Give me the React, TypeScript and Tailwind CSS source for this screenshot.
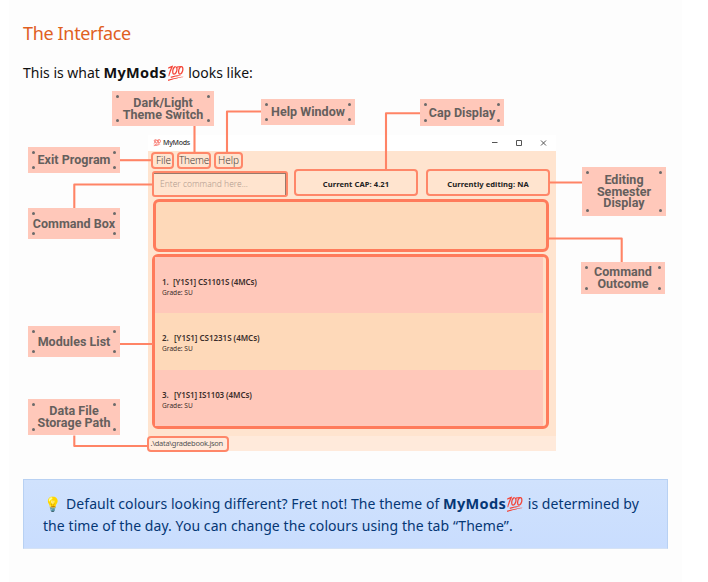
import type { ReactNode } from "react";

const SEGOE = "font-['Noto_Sans',sans-serif]";

function Hundred({ className = "" }: { className?: string }) {
  return <span className={`inline-block ${className}`}>💯</span>;
}

function Callout({ className, children }: { className: string; children: ReactNode }) {
  const dot = "absolute size-[3px] rounded-full bg-[#6b6a6a]";
  return (
    <div className={`absolute flex items-center justify-center bg-[#ffc8ba] ${className}`}>
      <span className={`${dot} left-[4px] top-[4px]`} />
      <span className={`${dot} right-[4px] top-[4px]`} />
      <span className={`${dot} left-[4px] bottom-[4px]`} />
      <span className={`${dot} right-[4px] bottom-[4px]`} />
      <div className="whitespace-nowrap text-center font-['Roboto',sans-serif] text-[12.5px] font-bold leading-[11.7px] tracking-[0.03px] text-[#655f5d]">
        {children}
      </div>
    </div>
  );
}

function Connectors() {
  return (
    <svg className="pointer-events-none absolute left-0 top-0" width="673" height="370" viewBox="9 90 673 370" fill="none" stroke="#ff8466" strokeWidth="2.1" strokeLinejoin="round">
      <path d="M194.5 126V152" />
      <path d="M261 111.5H227V152" />
      <path d="M420 113.2H386V169" />
      <path d="M120 160.2H151" />
      <path d="M74.3 208.5V184.5H152" />
      <path d="M549 182.5H582.5" />
      <path d="M549 238.5H621.7V262" />
      <path d="M116 344H153" />
      <path d="M74.3 435.5V446H148" />
    </svg>
  );
}

const modules = [
  { n: "1.", title: "[Y1S1] CS1101S (4MCs)", bg: "bg-[#ffc8ba]", num: "w-[11px]", fit: "tracking-[-0.12px]" },
  { n: "2.", title: "[Y1S1] CS1231S (4MCs)", bg: "bg-[#fed9b9]", num: "w-[12px]", fit: "tracking-[-0.03px]" },
  { n: "3.", title: "[Y1S1] IS1103 (4MCs)", bg: "bg-[#ffc8ba]", num: "w-[12px]", fit: "tracking-[-0.1px]" },
];

function AppWindow() {
  const tab = "flex h-[17px] items-center justify-center rounded-[4px] border-2 border-[#ff8769] text-[10px] font-light text-[#4b4240]";
  const status =
    "flex h-[27px] w-[124px] items-center justify-center rounded-[4px] border-2 border-[#ff8769] pt-[4px] text-[7.6px] font-bold tracking-[0.06px] text-[#222]";
  return (
    <div className={`ml-[139px] flex h-[316px] w-[408px] flex-col bg-[#ffe4cf] ${SEGOE}`}>
      <div className="flex h-4 shrink-0 items-center bg-white pl-[5px] text-[7px] font-medium tracking-[-0.28px] text-[#333]">
        <Hundred className="w-[10px] text-[6.5px]" />
        <span>MyMods</span>
        <svg className="ml-auto mr-[8px]" width="57" height="8" viewBox="0 0 57 8" fill="none" stroke="#555" strokeWidth="1">
          <path d="M1 3.5H6.5M25.5 1.5h5v5h-5zM50 1.5l5 5M55 1.5l-5 5" />
        </svg>
      </div>
      <div className="flex h-[18px] shrink-0 pl-[3px] pt-[1px]">
        <div className={`${tab} w-[23px] pl-[2px]`}>File</div>
        <div className={`${tab} ml-[3px] w-[34px] tracking-[-0.2px]`}>Theme</div>
        <div className={`${tab} ml-[3px] w-[29px]`}>Help</div>
      </div>
      <div className="flex h-[30px] shrink-0 pl-1">
        <div className="mt-[2px] h-[26px] w-[136px] rounded-[3px] border-2 border-[#ff8769]">
          <div className="flex h-full items-center border-r border-t border-[#98796b] pl-[6px] text-[8.5px] font-light text-[#b09a8e]">
            Enter command here...
          </div>
        </div>
        <div className={`ml-[6px] ${status}`}>Current CAP: 4.21</div>
        <div className={`ml-[8px] ${status}`}>Currently editing: NA</div>
      </div>
      <div className="ml-[5px] h-[53px] w-[396px] shrink-0 rounded-[6px] border-[3px] border-[#ff7b5b] bg-[#fed9b9]" />
      <div className="ml-[4px] mt-[2px] h-[175px] w-[397px] shrink-0 rounded-[6px] border-[3px] border-[#ff7b5b] bg-[#ffdfc8] pr-[3px]">
        {modules.map((m) => (
          <div key={m.n} className={`h-[56.33px] pl-[7px] pt-[19px] text-[#3b2e2b] ${m.bg}`}>
            <div className="flex text-[8px] font-semibold leading-[12px]">
              <span className={m.num}>{m.n}</span>
              <span className={m.fit}>{m.title}</span>
            </div>
            <div className="text-[6.6px] leading-[9px]">Grade: SU</div>
          </div>
        ))}
      </div>
      <div className="mt-auto h-[15px] bg-[#ffeadb]">
        <div className="-ml-px flex h-4 w-[82px] items-center rounded-[4px] border-2 border-[#ff8769] pl-[1.5px] text-[7.5px] tracking-[-0.28px] text-[#555]">
          .\data\gradebook.json
        </div>
      </div>
    </div>
  );
}

export default function App() {
  return (
    <div className="h-[582px] w-[708px] overflow-hidden bg-white">
      <main className={`ml-[9px] h-[582px] w-[673px] bg-[#fdfdfd] pt-[19px] ${SEGOE}`}>
        <h1 className="ml-[14px] h-[28px] text-[18px] leading-[28px] tracking-[-0.34px] text-[#e0601f]">The Interface</h1>
        <p className="ml-[14px] mt-[14px] h-[22px] whitespace-nowrap text-[14px] leading-[22px] text-[#111]">
          This is what <b className="text-[14.5px] tracking-[0.3px]">MyMods</b><Hundred className="w-[18px]" /> looks like:
        </p>
        <figure className="relative mt-[7px] h-[370px] pt-[45px]">
          <AppWindow />
          <Connectors />
          <Callout className="left-[103px] top-[1px] h-[35px] w-[102px]">Dark/Light<br />Theme Switch</Callout>
          <Callout className="left-[252px] top-[9px] h-[26px] w-[94px]">Help Window</Callout>
          <Callout className="left-[411px] top-[9px] h-[27px] w-[84px]">Cap Display</Callout>
          <Callout className="left-[19px] top-[57px] h-[26px] w-[92px]">Exit Program</Callout>
          <Callout className="left-[19px] top-[118px] h-[31px] w-[92px]">Command Box</Callout>
          <Callout className="left-[573px] top-[77px] h-[49px] w-[84px]">Editing<br />Semester<br />Display</Callout>
          <Callout className="left-[572px] top-[172px] h-[32px] w-[84px]">Command<br />Outcome</Callout>
          <Callout className="left-[19px] top-[236px] h-[31px] w-[92px]">Modules List</Callout>
          <Callout className="left-[19px] top-[309px] h-[36px] w-[92px]">Data File<br />Storage Path</Callout>
        </figure>
        <aside className="ml-[14px] mt-[19px] h-[70px] w-[645px] whitespace-nowrap border border-[#b8d1f3] border-b-[#d5e2f5] bg-linear-to-b from-[#d0e2fd] to-[#c9ddfe] pl-[19px] pt-[12px] text-[14px] leading-[22px] tracking-[0.07px] text-[#053775]">
          <p><span className="ml-[1px] inline-block w-[22px]">💡</span>Default colours looking different? Fret not! The theme of <b className="text-[14.5px] tracking-[0.3px]">MyMods</b><Hundred className="w-[18px]" /> is determined by</p>
          <p>the time of the day. You can change the colours using the tab “Theme”.</p>
        </aside>
      </main>
    </div>
  );
}
